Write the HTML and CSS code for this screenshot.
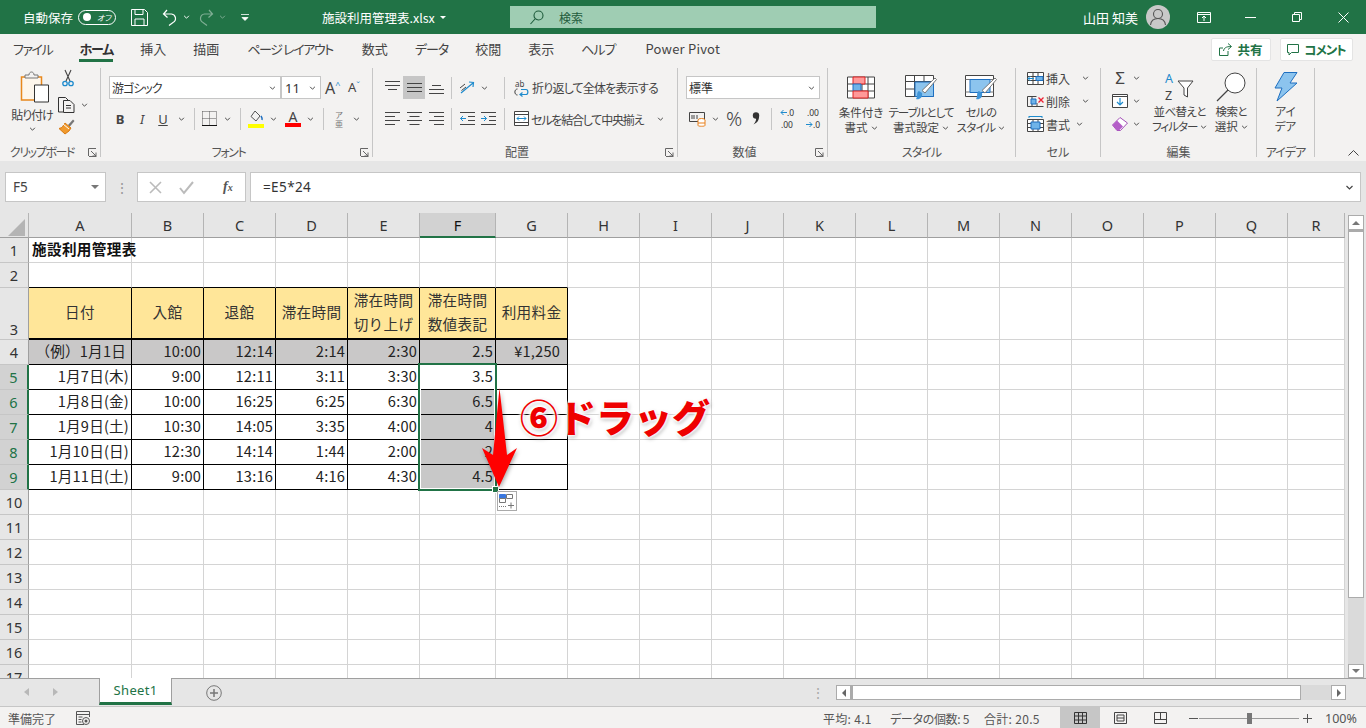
FILE: index.html
```html
<!DOCTYPE html>
<html lang="ja">
<head>
<meta charset="utf-8">
<title>施設利用管理表.xlsx - Excel</title>
<link rel="stylesheet" href="styles.css">
</head>
<body>
<svg class="defs" width="0" height="0" aria-hidden="true"><defs>
<symbol id="chev" viewBox="0 0 8 5"><path d="M1 1l3 3 3-3" fill="none" stroke="#444" stroke-width="1.2"/></symbol>
<symbol id="launch" viewBox="0 0 9 9"><path d="M.5 8V.5H8M3 3l5 5M8 4.500V8H4.500M1 8.500h7.500" fill="none" stroke="#666" stroke-width="1"/></symbol>
</defs></svg>

<header class="titlebar">
  <span class="qa-label">自動保存</span>
  <span class="toggle"><i class="toggle-dot"></i><em>オフ</em></span>
  <svg class="qa-save" width="17" height="17" viewBox="0 0 17 17"><path d="M.5.500h13l3 3v13H.5zM4 .5v5h8v-5M4 16.500V10h9v6.500" fill="none" stroke="#fff"/></svg>
  <svg class="qa-undo" width="16" height="17" viewBox="0 0 16 17"><path d="M5 1L1.500 5 5.500 8.500M2 5h7.500a4.500 4.500 0 0 1 1.500 8.500L7 16.500" fill="none" stroke="#fff" stroke-width="1.200"/></svg>
  <svg class="qa-chev" width="7" height="4" viewBox="0 0 8 5"><path d="M1 1l3 3 3-3" fill="none" stroke="#fff" stroke-width="1.200"/></svg>
  <svg class="qa-redo" width="16" height="17" viewBox="0 0 16 17"><path d="M11 1l3.500 4-4 3.500M14 5H6.500A4.500 4.500 0 0 0 5 13.500L9 16.500" fill="none" stroke="#7fae94" stroke-width="1.200"/></svg>
  <svg class="qa-chev2" width="7" height="4" viewBox="0 0 8 5"><path d="M1 1l3 3 3-3" fill="none" stroke="#7fae94" stroke-width="1.200"/></svg>
  <svg class="qa-more" width="8" height="8" viewBox="0 0 8 8"><path d="M0 1.500h8M1 4.500l3 3 3-3z" fill="#fff" stroke="#fff" stroke-width=".8"/></svg>
  <span class="doc-title">施設利用管理表.xlsx</span>
  <i class="doc-caret"></i>
  <div class="searchbox">
    <svg width="14" height="15" viewBox="0 0 14 15"><circle cx="8.500" cy="5.500" r="4.500" fill="none" stroke="#1f5c3c" stroke-width="1.100"/><path d="M5 9l-4.500 5" stroke="#1f5c3c" stroke-width="1.100"/></svg>
    <span>検索</span>
  </div>
  <span class="user">山田 知美</span>
  <span class="avatar"><svg width="24" height="24" viewBox="0 0 24 24"><circle cx="12" cy="9" r="4.500" fill="none" stroke="#555" stroke-width="1.100"/><path d="M4.500 20c.5-5 3.500-6.500 7.500-6.500s7 1.500 7.500 6.500" fill="none" stroke="#555" stroke-width="1.100"/></svg></span>
  <svg class="win win-first" width="14" height="11" viewBox="0 0 14 11"><path d="M.5.500h13v10H.5zM.5 2.500h13M7 9V4.500M5 6l2-2 2 2" fill="none" stroke="#fff"/></svg>
  <svg class="win win-min" width="11" height="1" viewBox="0 0 11 1"><path d="M0 .5h11" stroke="#fff"/></svg>
  <svg class="win win-max" width="10" height="10" viewBox="0 0 10 10"><path d="M.5 2.500h7v7h-7zM2.500 2.500v-2h7v7h-2" fill="none" stroke="#fff"/></svg>
  <svg class="win win-close" width="11" height="11" viewBox="0 0 11 11"><path d="M.5.500l10 10M10.500.500l-10 10" stroke="#fff"/></svg>
</header>

<nav class="tabs">
  <span class="tab ls14">ファイル</span>
  <span class="tab tab-on ls11">ホーム</span>
  <span class="tab">挿入</span>
  <span class="tab">描画</span>
  <span class="tab ls14 ml1">ページ レイアウト</span>
  <span class="tab ml2">数式</span>
  <span class="tab ls10">データ</span>
  <span class="tab">校閲</span>
  <span class="tab">表示</span>
  <span class="tab ls10">ヘルプ</span>
  <span class="tab tab-en ml3">Power Pivot</span>
  <button class="pill pill-share"><svg width="13" height="13" viewBox="0 0 13 13"><path d="M9 .5l3.500 3L9 6.500M12 3.500C7 3.500 5 5 4.500 8M9 8v4.500H.5V5H4" fill="none" stroke="#217346"/></svg><b>共有</b></button>
  <button class="pill pill-comment"><svg width="12" height="12" viewBox="0 0 12 12"><path d="M.5.500h11v8H4.500L2 11V8.500H.5z" fill="none" stroke="#217346"/></svg><b class="ls10">コメント</b></button>
</nav>

<section class="ribbon">
  <div class="group g-clip">
    <div class="body row-body">
      <div class="paste">
        <svg width="30" height="32" viewBox="0 0 30 32"><path d="M1.500 7h20v23h-20z" fill="#fdf6ec" stroke="#e8881c" stroke-width="1.500"/><path d="M5 8V5h4c0-4 5-4 5 0h4v3z" fill="#f3f2f1" stroke="#777"/><path d="M14.500 15h14v17h-14z" fill="#fff" stroke="#333"/></svg>
        <span class="ls10">貼り付け</span>
        <svg class="ch" width="7" height="4"><use href="#chev"/></svg>
      </div>
      <div class="clip-col">
        <svg width="16" height="17" viewBox="0 0 16 17"><path d="M5 0l5 11M11 0L6 11" stroke="#444" stroke-width="1.100"/><circle cx="5" cy="13.500" r="2.200" fill="none" stroke="#1e8bcd" stroke-width="1.300"/><circle cx="11" cy="13.500" r="2.200" fill="none" stroke="#1e8bcd" stroke-width="1.300"/></svg>
        <div class="clip-copy">
          <svg width="17" height="16" viewBox="0 0 17 16"><path d="M5 15H.5V.5h7L10 3M5.500 3.500H12l4 4v8H5.500zM8 8.500h5M8 11h5" fill="#f3f2f1" stroke="#333"/></svg>
          <svg class="ch" width="7" height="4"><use href="#chev"/></svg>
        </div>
        <svg width="17" height="16" viewBox="0 0 17 16"><path d="M10 6l5-5.500 1.500 1.500-5 6z" fill="#777"/><path d="M7 4l6 5-2 3L7 15 1 9.500l3-1z" fill="#f09a2e" stroke="#d97a10"/><path d="M5 5l6 5" stroke="#fff"/></svg>
      </div>
    </div>
    <div class="label-row"><span class="glabel ls14">クリップボード</span><svg class="launch" width="9" height="9"><use href="#launch"/></svg></div>
  </div>

  <div class="group g-font">
    <div class="body stack">
      <div class="tool-row">
        <div class="combo c-font"><span class="ls10">游ゴシック</span><svg width="7" height="4"><use href="#chev"/></svg></div>
        <div class="combo c-size"><span>11</span><svg width="7" height="4"><use href="#chev"/></svg></div>
        <span class="growA">A<sup>^</sup></span>
        <span class="shrinkA">A<sup>ˇ</sup></span>
      </div>
      <div class="tool-row">
        <span class="slot w22 t-b">B</span>
        <span class="slot w22 t-i">I</span>
        <span class="slot w20 t-u">U</span>
        <span class="slot w16"><svg width="7" height="4"><use href="#chev"/></svg></span>
        <i class="sep ml5"></i>
        <span class="slot w22 ml3"><svg width="15" height="15" viewBox="0 0 15 15"><path d="M.5.500h14M.5.500v14M14.500.500v14M7.500.500v14M.5 7.500h14" fill="none" stroke="#555" stroke-dasharray="1 1"/><path d="M0 14.500h15" stroke="#111"/></svg></span>
        <span class="slot w14"><svg width="7" height="4"><use href="#chev"/></svg></span>
        <i class="sep ml6"></i>
        <span class="slot w20 ml5"><svg width="16" height="18" viewBox="0 0 16 18"><path d="M7 1l5 5-4 5-5-4.500z" fill="none" stroke="#555"/><path d="M13 6c1 1.500 1.500 2.500 1 4" stroke="#1e6fc0" stroke-width="1.500" fill="none"/><path d="M0 14h16v4H0z" fill="#ffff00"/></svg></span>
        <span class="slot w14"><svg width="7" height="4"><use href="#chev"/></svg></span>
        <span class="slot w20 ml3 colorA">A<i></i></span>
        <span class="slot w14"><svg width="7" height="4"><use href="#chev"/></svg></span>
        <i class="sep ml6"></i>
        <span class="slot w20 ml5 phon">ア<br>亜</span>
        <span class="slot w14"><svg width="7" height="4"><use href="#chev"/></svg></span>
      </div>
    </div>
    <div class="label-row"><span class="glabel ls14">フォント</span><svg class="launch" width="9" height="9"><use href="#launch"/></svg></div>
  </div>

  <div class="group g-align">
    <div class="body stack">
      <div class="tool-row">
        <span class="slot w22"><svg width="15" height="13" viewBox="0 0 15 13"><path d="M0 .5h15M0 4.500h15M3 8.500h9" stroke="#444" fill="none"/></svg></span>
        <span class="slot w22 slot-on"><svg width="15" height="13" viewBox="0 0 15 13"><path d="M0 2.500h15M0 6.500h15M0 10.500h15" stroke="#444" fill="none"/></svg></span>
        <span class="slot w22"><svg width="15" height="13" viewBox="0 0 15 13"><path d="M3 4.500h9M0 8.500h15M0 12.500h15" stroke="#444" fill="none"/></svg></span>
        <i class="sep ml4"></i>
        <span class="slot w20 ml5"><svg width="16" height="15" viewBox="0 0 16 15"><path d="M2 13l12-10M10 2l4.500.5L14 7" fill="none" stroke="#1e8bcd" stroke-width="1.200"/><path d="M1 8l5-4M2.500 10.500L7 7" stroke="#444"/></svg></span>
        <span class="slot w14"><svg width="7" height="4"><use href="#chev"/></svg></span>
        <i class="sep ml13"></i>
        <span class="slot w20 ml6"><svg width="15" height="17" viewBox="0 0 15 17"><text x="1" y="8" font-size="8" fill="#444" class="svgt">ab</text><path d="M3.500 16C0 16 0 10 3.500 10" fill="none" stroke="#444"/><path d="M7 10.500h5c2.500 0 2.500 5 0 5H6M8.500 13.500l-2.500 2 2.500 2" fill="none" stroke="#1e8bcd" stroke-width="1.200"/></svg></span>
        <span class="rtext ml1 ls-wrap">折り返して全体を表示する</span>
      </div>
      <div class="tool-row">
        <span class="slot w22"><svg width="15" height="13" viewBox="0 0 15 13"><path d="M0 .5h15M0 4.500h10M0 8.500h15M0 12.500h10" stroke="#444" fill="none"/></svg></span>
        <span class="slot w22"><svg width="15" height="13" viewBox="0 0 15 13"><path d="M0 .5h15M2.500 4.500h10M0 8.500h15M2.500 12.500h10" stroke="#444" fill="none"/></svg></span>
        <span class="slot w22"><svg width="15" height="13" viewBox="0 0 15 13"><path d="M0 .5h15M5 4.500h10M0 8.500h15M5 12.500h10" stroke="#444" fill="none"/></svg></span>
        <i class="sep ml4"></i>
        <span class="slot w20 ml5"><svg width="15" height="13" viewBox="0 0 15 13"><path d="M0 .5h15M8 4.500h7M8 8.500h7M0 12.500h15" stroke="#444" fill="none"/><path d="M6 6.500H.5M3 4L.5 6.500 3 9" fill="none" stroke="#1e8bcd"/></svg></span>
        <span class="slot w22"><svg width="15" height="13" viewBox="0 0 15 13"><path d="M0 .5h15M8 4.500h7M8 8.500h7M0 12.500h15" stroke="#444" fill="none"/><path d="M0 6.500h5.500M3 4l2.500 2.500L3 9" fill="none" stroke="#1e8bcd"/></svg></span>
        <i class="sep ml5"></i>
        <span class="slot w20 ml6"><svg width="15" height="15" viewBox="0 0 15 15"><path d="M.5.500h14v14H.5z" fill="#fff" stroke="#444"/><path d="M.5 3.500h14M.5 11.500h14" stroke="#444"/><path d="M3 7.500h9M5 5.500l-2 2 2 2M10 5.500l2 2-2 2" fill="none" stroke="#1e8bcd"/></svg></span>
        <span class="rtext ml0 merge-text">セルを結合して中央揃え</span>
        <span class="slot w14 ml6"><svg width="7" height="4"><use href="#chev"/></svg></span>
      </div>
    </div>
    <div class="label-row"><span class="glabel">配置</span><svg class="launch" width="9" height="9"><use href="#launch"/></svg></div>
  </div>

  <div class="group g-num">
    <div class="body stack">
      <div class="tool-row">
        <div class="combo c-num"><span>標準</span><svg width="7" height="4"><use href="#chev"/></svg></div>
      </div>
      <div class="tool-row">
        <span class="slot w22"><svg width="17" height="16" viewBox="0 0 17 16"><path d="M.5 1.500h15v9H.5z" fill="none" stroke="#444"/><path d="M3 4v4M5 4v4M8 4v4" stroke="#444"/><ellipse cx="12.500" cy="9" rx="3.500" ry="1.500" fill="#fff" stroke="#e8801c"/><path d="M9 9v5.500c0 1 7 1 7 0V9M9 12h7" fill="#fff" stroke="#e8801c"/></svg></span>
        <span class="slot w14"><svg width="7" height="4"><use href="#chev"/></svg></span>
        <span class="slot w22 ml1 t-pct">%</span>
        <span class="slot w22"><svg width="8" height="13" viewBox="0 0 8 13"><circle cx="4" cy="3.500" r="3.200" fill="#333"/><path d="M7 3.500C7.500 8 5 11 1.500 12.500 3.500 10 4.500 8 4 6z" fill="#333"/></svg></span>
        <i class="sep ml4"></i>
        <span class="slot w26 ml2 t-dec"><span><svg width="7" height="7" viewBox="0 0 7 7"><path d="M7 3.500H1M3.500 1L1 3.500 3.500 6" fill="none" stroke="#1e8bcd"/></svg>.0<br>.00</span></span>
        <span class="slot w26 t-dec"><span>.00<br><svg width="7" height="7" viewBox="0 0 7 7"><path d="M0 3.500h6M3.500 1L6 3.500 3.500 6" fill="none" stroke="#1e8bcd"/></svg>.0</span></span>
      </div>
    </div>
    <div class="label-row"><span class="glabel">数値</span><svg class="launch" width="9" height="9"><use href="#launch"/></svg></div>
  </div>

  <div class="group g-style">
    <div class="body row-body styles">
      <div class="big">
        <svg width="28" height="23" viewBox="0 0 28 23"><path d="M.5.500h27v21H.5zM.5 7.500h27M.5 14.500h27M6.500.500v21M15 .500v21M21 .500v21" fill="#fff" stroke="#444"/><path d="M6 .5h12v7H6z" fill="#f99" stroke="#d22"/><path d="M6 7.500h8v7H6z" fill="#6fb3e8" stroke="#1e6fc0"/><path d="M6 14.500h15v7H6z" fill="#f99" stroke="#d22"/></svg>
        <span>条件付き</span><span>書式<svg class="ch" width="7" height="4"><use href="#chev"/></svg></span>
      </div>
      <div class="big">
        <svg width="32" height="26" viewBox="0 0 32 26"><path d="M.5.500h28v21H.5zM.5 6.500h28M.5 14h28M9.500.500v21M19 .500v21" fill="#fff" stroke="#444"/><path d="M10 7h18.500v14.500H10z" fill="#8cc4ee" stroke="#1e6fc0"/><path d="M30 3l1.500 1.500L20 18l-3-2.500z" fill="#fff" stroke="#777"/><path d="M11 24c3 1 7-1 6-6l-3-2c-3 1-1 6-3 8z" fill="#3e94d8"/></svg>
        <span class="ls10">テーブルとして</span><span>書式設定<svg class="ch" width="7" height="4"><use href="#chev"/></svg></span>
      </div>
      <div class="big">
        <svg width="32" height="26" viewBox="0 0 32 26"><path d="M.5.500h28v21H.5z" fill="#fff" stroke="#444"/><path d="M.5 4.500h28M.5 17h28" stroke="#777"/><path d="M5 4.500h20v13H5z" fill="#8cc4ee" stroke="#1e6fc0"/><path d="M30 3l1.500 1.500L20 18l-3-2.500z" fill="#fff" stroke="#777"/><path d="M11 24c3 1 7-1 6-6l-3-2c-3 1-1 6-3 8z" fill="#3e94d8"/></svg>
        <span class="ls06">セルの</span><span class="ls06">スタイル<svg class="ch" width="7" height="4"><use href="#chev"/></svg></span>
      </div>
    </div>
    <div class="label-row center"><span class="glabel ls10">スタイル</span></div>
  </div>

  <div class="group g-cell">
    <div class="body rows3">
      <div class="cell-row"><svg width="17" height="15" viewBox="0 0 17 15"><path d="M.5 1.500h16v12H.5zM.5 5.500h16M.5 9.500h16M6 1.500v12M11 1.500v12" fill="#fff" stroke="#444"/><path d="M9 5.500h7v4H9z" fill="#6fb3e8" stroke="#1e6fc0"/><path d="M7 7.500H1M3.500 5L1 7.500 3.500 10" fill="none" stroke="#1e8bcd"/></svg><span>挿入</span><svg class="ch" width="7" height="4"><use href="#chev"/></svg></div>
      <div class="cell-row"><svg width="17" height="15" viewBox="0 0 17 15"><path d="M.5 2.500h9M.5 12.500h16M.5 2.500v10M5 2.500v10M10 12.500V9" fill="none" stroke="#444"/><path d="M4 5h5v5H4z" fill="#6fb3e8" stroke="#1e6fc0"/><path d="M11.500 3.500l5 5M16.500 3.500l-5 5" stroke="#e23" stroke-width="1.300"/></svg><span>削除</span><svg class="ch" width="7" height="4"><use href="#chev"/></svg></div>
      <div class="cell-row"><svg width="17" height="16" viewBox="0 0 17 16"><path d="M.5 3.500h16v12H.5zM6 3.500v12M11 3.500v12M.5 7.500h16M.5 11.500h16" fill="#fff" stroke="#444"/><path d="M4 6h9v7H4z" fill="#6fb3e8" stroke="#1e6fc0"/><path d="M2 .5h13M2 0v2M15 0v2" stroke="#1e8bcd"/></svg><span>書式</span><svg class="ch ch-near" width="7" height="4"><use href="#chev"/></svg></div>
    </div>
    <div class="label-row center"><span class="glabel">セル</span></div>
  </div>

  <div class="group g-edit">
    <div class="body row-body">
      <div class="rows3 edit-col">
        <div class="edit-row"><span class="sigma">Σ</span><svg class="ch" width="7" height="4"><use href="#chev"/></svg></div>
        <div class="edit-row"><svg width="16" height="14" viewBox="0 0 16 14"><path d="M.5.500h15v13H.5z" fill="#fff" stroke="#444"/><path d="M.5 2.500h15" stroke="#444"/><path d="M8 4v7M5 8l3 3 3-3" fill="none" stroke="#1e8bcd" stroke-width="1.200"/></svg><svg class="ch" width="7" height="4"><use href="#chev"/></svg></div>
        <div class="edit-row"><svg width="16" height="14" viewBox="0 0 16 14"><path d="M.5 8L8 .5 15.500 6 8.500 13.500H5z" fill="#fff" stroke="#a350b8"/><path d="M.5 8L5 3.500 11 9.500 7 13.500H5z" fill="#b45fc8"/></svg><svg class="ch" width="7" height="4"><use href="#chev"/></svg></div>
      </div>
      <div class="big b-sort">
        <svg width="30" height="30" viewBox="0 0 30 30"><text x="0" y="11" font-size="12.500" fill="#1e8bcd" class="svgt">A</text><text x="0" y="28" font-size="12.500" fill="#444" class="svgt">Z</text><path d="M13 9h15l-5.500 7v9l-3.500-2v-7z" fill="#fff" stroke="#444"/></svg>
        <span class="ls06">並べ替えと</span><span class="ls10">フィルター<svg class="ch" width="7" height="4"><use href="#chev"/></svg></span>
      </div>
      <div class="big b-find">
        <svg width="30" height="30" viewBox="0 0 30 30"><circle cx="19" cy="11" r="10" fill="#fff" stroke="#444"/><path d="M12 18L1 29" stroke="#444" stroke-width="1.200"/></svg>
        <span class="ls06">検索と</span><span>選択<svg class="ch" width="7" height="4"><use href="#chev"/></svg></span>
      </div>
    </div>
    <div class="label-row center"><span class="glabel">編集</span></div>
  </div>

  <div class="group g-idea">
    <div class="body">
      <div class="big b-idea">
        <svg width="24" height="30" viewBox="0 0 24 30"><path d="M10 .5h13L16 11h7L3 29l5-13H1z" fill="#8cc4ee" stroke="#1e6fc0"/></svg>
        <span>アイ</span><span>デア</span>
      </div>
    </div>
    <div class="label-row center"><span class="glabel ls10">アイデア</span></div>
  </div>

  <svg class="collapse" width="11" height="6" viewBox="0 0 11 6"><path d="M.5 5.500l5-5 5 5" fill="none" stroke="#444"/></svg>
</section>

<section class="formula">
  <div class="namebox"><span>F5</span><i></i></div>
  <span class="dots">⋮</span>
  <div class="fxbox">
    <svg width="13" height="13" viewBox="0 0 13 13"><path d="M1 1l11 11M12 1L1 12" stroke="#bbb" stroke-width="1.600"/></svg>
    <svg width="15" height="13" viewBox="0 0 15 13"><path d="M1 7l4 5L14 1" fill="none" stroke="#bbb" stroke-width="2"/></svg>
    <em>f<small>x</small></em>
  </div>
  <div class="fx-input"><span>=E5*24</span><svg width="9" height="5"><use href="#chev"/></svg></div>
</section>

<main class="sheet">
  <div class="grid-wrap">
    <table class="grid">
      <colgroup><col class="c0"><col class="ca"><col class="c72"><col class="c72"><col class="c72"><col class="c72"><col class="cf"><col class="c72"><col class="c72"><col class="c72"><col class="c72"><col class="c72"><col class="c72"><col class="c72"><col class="c72"><col class="c72"><col class="c72"><col class="c72"><col class="cr"></colgroup>
      <thead><tr>
        <th class="corner"><svg width="17" height="17" viewBox="0 0 17 17"><path d="M17 0v17H0z" fill="#b4b4b4"/></svg></th>
        <th>A</th><th>B</th><th>C</th><th>D</th><th>E</th><th class="col-on">F</th><th>G</th><th>H</th><th>I</th><th>J</th><th>K</th><th>L</th><th>M</th><th>N</th><th>O</th><th>P</th><th>Q</th><th>R</th>
      </tr></thead>
      <tbody>
        <tr><th>1</th><td class="title" colspan="1">施設利用管理表</td><td></td><td></td><td></td><td></td><td></td><td></td><td></td><td></td><td></td><td></td><td></td><td></td><td></td><td></td><td></td><td></td><td></td></tr>
        <tr class="pre"><th>2</th><td class="bb"></td><td class="bb"></td><td class="bb"></td><td class="bb"></td><td class="bb"></td><td class="bb"></td><td class="bb"></td><td></td><td></td><td></td><td></td><td></td><td></td><td></td><td></td><td></td><td></td><td></td></tr>
        <tr class="r3"><th class="bottom">3</th><td class="hd">日付</td><td class="hd">入館</td><td class="hd">退館</td><td class="hd">滞在時間</td><td class="hd">滞在時間<br>切り上げ</td><td class="hd">滞在時間<br>数値表記</td><td class="hd">利用料金</td><td></td><td></td><td></td><td></td><td></td><td></td><td></td><td></td><td></td><td></td><td></td></tr>
        <tr><th>4</th><td class="ex pa">（例）1月1日</td><td class="ex">10:00</td><td class="ex">12:14</td><td class="ex">2:14</td><td class="ex">2:30</td><td class="ex">2.5</td><td class="ex pg">¥1,250</td><td></td><td></td><td></td><td></td><td></td><td></td><td></td><td></td><td></td><td></td><td></td></tr>
        <tr><th class="row-on">5</th><td class="dt">1月7日(木)</td><td class="dt">9:00</td><td class="dt">12:11</td><td class="dt">3:11</td><td class="dt">3:30</td><td class="dt">3.5</td><td class="dt"></td><td></td><td></td><td></td><td></td><td></td><td></td><td></td><td></td><td></td><td></td><td></td></tr>
        <tr><th class="row-on">6</th><td class="dt">1月8日(金)</td><td class="dt">10:00</td><td class="dt">16:25</td><td class="dt">6:25</td><td class="dt">6:30</td><td class="dt sel">6.5</td><td class="dt"></td><td></td><td></td><td></td><td></td><td></td><td></td><td></td><td></td><td></td><td></td><td></td></tr>
        <tr><th class="row-on">7</th><td class="dt">1月9日(土)</td><td class="dt">10:30</td><td class="dt">14:05</td><td class="dt">3:35</td><td class="dt">4:00</td><td class="dt sel">4</td><td class="dt"></td><td></td><td></td><td></td><td></td><td></td><td></td><td></td><td></td><td></td><td></td><td></td></tr>
        <tr><th class="row-on">8</th><td class="dt">1月10日(日)</td><td class="dt">12:30</td><td class="dt">14:14</td><td class="dt">1:44</td><td class="dt">2:00</td><td class="dt sel">2</td><td class="dt"></td><td></td><td></td><td></td><td></td><td></td><td></td><td></td><td></td><td></td><td></td><td></td></tr>
        <tr><th class="row-on">9</th><td class="dt">1月11日(土)</td><td class="dt">9:00</td><td class="dt">13:16</td><td class="dt">4:16</td><td class="dt">4:30</td><td class="dt sel">4.5</td><td class="dt"></td><td></td><td></td><td></td><td></td><td></td><td></td><td></td><td></td><td></td><td></td><td></td></tr>
        <tr><th>10</th><td></td><td></td><td></td><td></td><td></td><td></td><td></td><td></td><td></td><td></td><td></td><td></td><td></td><td></td><td></td><td></td><td></td><td></td></tr>
        <tr><th>11</th><td></td><td></td><td></td><td></td><td></td><td></td><td></td><td></td><td></td><td></td><td></td><td></td><td></td><td></td><td></td><td></td><td></td><td></td></tr>
        <tr><th>12</th><td></td><td></td><td></td><td></td><td></td><td></td><td></td><td></td><td></td><td></td><td></td><td></td><td></td><td></td><td></td><td></td><td></td><td></td></tr>
        <tr><th>13</th><td></td><td></td><td></td><td></td><td></td><td></td><td></td><td></td><td></td><td></td><td></td><td></td><td></td><td></td><td></td><td></td><td></td><td></td></tr>
        <tr><th>14</th><td></td><td></td><td></td><td></td><td></td><td></td><td></td><td></td><td></td><td></td><td></td><td></td><td></td><td></td><td></td><td></td><td></td><td></td></tr>
        <tr><th>15</th><td></td><td></td><td></td><td></td><td></td><td></td><td></td><td></td><td></td><td></td><td></td><td></td><td></td><td></td><td></td><td></td><td></td><td></td></tr>
        <tr><th>16</th><td></td><td></td><td></td><td></td><td></td><td></td><td></td><td></td><td></td><td></td><td></td><td></td><td></td><td></td><td></td><td></td><td></td><td></td></tr>
        <tr><th>17</th><td></td><td></td><td></td><td></td><td></td><td></td><td></td><td></td><td></td><td></td><td></td><td></td><td></td><td></td><td></td><td></td><td></td><td></td></tr>
      </tbody>
    </table>
    <div class="selection"></div>
    <div class="handle"></div>
    <div class="autofill"><svg width="16" height="15" viewBox="0 0 16 15"><path d="M.5.500h6v4h-6z" fill="#3a78e0" stroke="#3a78e0"/><path d="M7.500.500h6v4h-6zM.5 4.500h6v4h-6z" fill="#fff" stroke="#777"/><path d="M0 12.500h7" stroke="#777" stroke-dasharray="1 1"/><path d="M9 11.500h6M12 8.500v6" stroke="#777"/></svg></div>
    <svg class="arrow" width="50" height="115" viewBox="0 0 50 115"><path d="M21.500 7L29 74l10-7-18 39L4 67l11 7z" fill="#ff0000"/></svg>
    <div class="callout">⑥ドラッグ</div>
  </div>
  <aside class="vscroll">
    <span class="vbtn"><i class="up"></i></span>
    <span class="vthumb"></span>
    <span class="vtrack"></span>
    <span class="vbtn vbtn-end"><i class="down"></i></span>
  </aside>
</main>

<section class="sheetbar">
  <i class="nav nav-l"></i>
  <i class="nav nav-r"></i>
  <div class="sheettab">Sheet1</div>
  <svg class="addsheet" width="16" height="16" viewBox="0 0 16 16"><circle cx="8" cy="8" r="7.300" fill="none" stroke="#777"/><path d="M8 4v8M4 8h8" stroke="#777" stroke-width="1.500"/></svg>
  <span class="hdots">⋮</span>
  <div class="hscroll">
    <span class="hbtn"><i class="left"></i></span>
    <span class="hthumb"></span>
    <span class="htrack"></span>
    <span class="hbtn"><i class="right"></i></span>
  </div>
</section>

<footer class="status">
  <span class="ready">準備完了</span>
  <svg class="macro" width="14" height="14" viewBox="0 0 14 14"><path d="M8 13.500H.5V.5h13V6M.5 3.500h13M2.500 6h4M2.500 8.500h3M2.500 11h3" fill="none" stroke="#555"/><circle cx="10" cy="10" r="3.500" fill="none" stroke="#555"/><circle cx="10" cy="10" r="1.500" fill="#555"/></svg>
  <span class="stat s1">平均: 4.1</span>
  <span class="stat s2">データの個数: 5</span>
  <span class="stat s3">合計: 20.5</span>
  <span class="view view-on"><svg width="13" height="12" viewBox="0 0 13 12"><path d="M.5.500h12v11H.5zM.5 4h12M.5 8h12M4.500.500v11M8.500.500v11" fill="none" stroke="#333"/></svg></span>
  <span class="view"><svg width="13" height="12" viewBox="0 0 13 12"><path d="M.5.500h12v11H.5zM3 3h7v6H3zM3 6h7" fill="none" stroke="#444"/></svg></span>
  <span class="view"><svg width="13" height="12" viewBox="0 0 13 12"><path d="M.5.500h12v11H.5zM.5 7.500h12M6.500.500v7" fill="none" stroke="#444"/></svg></span>
  <span class="zoom-minus"></span>
  <span class="slider"><i></i></span>
  <span class="zoom-plus"></span>
  <span class="pct">100%</span>
</footer>
</body>
</html>
```
FILE: styles.css
```css
*{box-sizing:border-box}
html,body{margin:0;padding:0;height:100%}
body{width:1366px;height:728px;overflow:hidden;display:flex;flex-direction:column;background:#e6e6e6;font-family:"Noto Sans CJK JP","Noto Sans",sans-serif;font-feature-settings:"palt";color:#444}
.defs{position:absolute}
svg{display:block;flex:none;overflow:visible}
.svgt{font-family:"Noto Sans","Noto Sans CJK JP",sans-serif}
.ls06{letter-spacing:-.6px}
.ls10{letter-spacing:-1px}
.ls11{letter-spacing:-1.1px}
.ls12{letter-spacing:-1.2px}
.ls14{letter-spacing:-1.4px}

/* title bar */
.titlebar{height:34px;background:#217346;color:#fff;display:flex;align-items:center;font-size:12px;flex:none}
.qa-label{margin-left:23px;width:49px;white-space:nowrap;font-size:12.500px}
.toggle{margin-left:6px;width:38px;height:15px;border:1px solid #fff;border-radius:8px;display:flex;align-items:center;padding-left:4px}
.toggle-dot{width:8px;height:8px;border-radius:50%;background:#fff}
.toggle em{font-size:8px;margin-left:6px;font-style:italic;white-space:nowrap}
.qa-save{margin-left:15px}
.qa-undo{margin-left:14px}
.qa-chev{margin-left:5px}
.qa-redo{margin-left:8px}
.qa-chev2{margin-left:5px}
.qa-more{margin-left:15px}
.doc-title{margin-left:73px;width:112px;white-space:nowrap;font-size:12.500px}
.doc-caret{margin-left:6px;border:3px solid transparent;border-top:3px solid #fff;margin-top:3px}
.searchbox{margin-left:64px;width:366px;height:22px;background:#9fcdb3;display:flex;align-items:center;padding-left:20px;color:#1f5c3c}
.searchbox span{margin-left:15px}
.user{margin-left:207px;width:53px;white-space:nowrap;font-size:13px}
.avatar{margin-left:10px;width:24px;height:24px;border-radius:50%;background:#c8c8c8}
.win-first{margin-left:27px}
.win-min{margin-left:34px}
.win-max{margin-left:36px}
.win-close{margin-left:36px}

/* tabs */
.tabs{height:28px;background:#f3f2f1;display:flex;align-items:center;padding-left:13px;font-size:13px;flex:none}
.tab{margin-right:27px;white-space:nowrap;color:#444;height:28px;line-height:30px}
.tab-on{font-weight:700;color:#333;border-bottom:3px solid #217346;height:28px}
.tab-en{letter-spacing:.2px}
.pill{height:23px;background:#fff;border:1px solid #e4e4e4;border-radius:2px;display:flex;align-items:center;justify-content:center;gap:5px;font:inherit;font-size:12.500px;color:#217346;padding:0;margin-top:3px}
.pill b{font-weight:700}
.pill-share{margin-left:auto;width:60px}
.pill-comment{margin-left:9px;width:73px;margin-right:13px}

/* ribbon */
.ribbon{height:99px;background:#f3f2f1;display:flex;font-size:11.500px;flex:none;align-items:flex-start;color:#444}
.group{height:89px;margin-top:6px;border-right:1px solid #c6c6c6;display:flex;flex-direction:column;flex:none}
.body{height:76px;flex:none}
.row-body{display:flex}
.stack{padding:8px 0 0 8px;display:flex;flex-direction:column;gap:8px}
.label-row{height:13px;display:flex;align-items:center;padding-top:2px}
.glabel{flex:1;text-align:center;font-size:12px;color:#555;white-space:nowrap}
.launch{margin:1px 3px 0 4px}
.g-clip{width:101px}
.g-font{width:272px}
.g-align{width:305px}
.g-num{width:150px}
.g-style{width:188px}
.g-cell{width:85px}
.g-edit{width:156px}
.g-idea{width:58px}
.collapse{margin:88px 0 0 33px}

.paste{margin-left:10px;width:44px;display:flex;flex-direction:column;align-items:center;padding-top:2px;white-space:nowrap;font-size:12px}
.paste svg:first-child{margin-left:6px}
.paste span{margin-top:5px;line-height:16px}
.paste .ch{margin-top:4px}
.clip-col{margin-left:4px;display:flex;flex-direction:column;gap:6px;padding-top:2px}
.clip-col>svg:first-child{margin-left:2px}
.clip-copy{display:flex;align-items:center;gap:6px;margin-top:4px}

.tool-row{height:23px;display:flex;align-items:center;flex:none}
.combo{height:23px;background:#fff;border:1px solid #c6c6c6;display:flex;align-items:center;justify-content:space-between;padding:0 4px 0 2px;font-size:12px;color:#333;flex:none}
.c-font{width:172px}
.c-size{width:40px;font-family:"Noto Sans",sans-serif;font-size:13px;padding-left:3px}
.c-num{width:134px}
.growA,.shrinkA{font-family:"Noto Sans",sans-serif;line-height:1;display:flex;color:#444;white-space:nowrap}
.growA{font-size:16px;margin-left:4px;width:22px}
.shrinkA{font-size:13px;margin-left:1px}
.growA sup,.shrinkA sup{font-size:9px;color:#1e8bcd;line-height:1}
.slot{display:flex;align-items:center;justify-content:center;height:23px;flex:none;font-family:"Noto Sans",sans-serif}
.slot-on{background:#c6c6c6}
.w14{width:14px}.w16{width:16px}.w20{width:20px}.w22{width:22px}.w26{width:26px}
.ml0{margin-left:0}.ml1{margin-left:1px}.ml2{margin-left:2px}.ml3{margin-left:3px}.ml4{margin-left:4px}.ml5{margin-left:5px}.ml6{margin-left:6px}.ml13{margin-left:13px}
.sep{width:1px;height:22px;background:#c6c6c6;flex:none}
.t-b{font-weight:700;font-size:13px}
.t-i{font-style:italic;font-size:13px}
.t-u{font-size:13px;text-decoration:underline}
.colorA{flex-direction:column;font-size:14px;line-height:13px;color:#444}
.colorA i{width:16px;height:4px;background:#f00}
.phon{font-family:"Noto Sans CJK JP",sans-serif;font-size:8px;line-height:9px;color:#777;display:block;text-align:center;padding-top:3px}
.t-pct{font-size:20px;font-weight:300}
.t-dec{font-size:8.500px;line-height:11.500px;color:#333;text-align:center}
.t-dec svg{display:inline-block}
.rtext{white-space:nowrap;font-size:12px;color:#444}
.ls-wrap{letter-spacing:-.8px}
.merge-text{width:116px;letter-spacing:-1.2px;margin-top:2px}

.styles{padding:0 0 0 3px}
.big{width:60px;display:flex;flex-direction:column;align-items:center;font-size:11.500px;line-height:15px;white-space:nowrap;padding-top:7px}
.big>svg:first-child{margin-bottom:4px;height:26px}
.big span{display:flex;align-items:center;gap:3px}
.rows3{display:flex;flex-direction:column;gap:3px}
.cell-row{height:20px;display:flex;align-items:center;margin-left:11px;font-size:12px;white-space:nowrap}
.cell-row span{margin-left:2px;width:30px}
.cell-row .ch{margin-left:6px}
.cell-row .ch-near{margin-left:0}
.edit-col{margin-left:11px;width:46px;flex:none}
.edit-row{height:20px;display:flex;align-items:center;gap:5px}
.sigma{width:16px;font-size:17px;line-height:18px;font-family:"Noto Sans",sans-serif;text-align:center;color:#444}
.b-sort{width:60px;margin-left:-8px;padding-top:4px}
.b-sort>svg:first-child,.b-find>svg:first-child,.b-idea>svg:first-child{height:30px;margin-bottom:2px}
.b-find{width:50px;padding-top:4px;margin-left:-3px}
.b-idea{width:57px;padding-top:4px}

/* formula bar */
.formula{height:52px;flex:none;display:flex;align-items:flex-start;padding:11px 5px 0;background:#e6e6e6}
.namebox,.fxbox,.fx-input{height:30px;background:#fff;border:1px solid #c6c6c6;display:flex;align-items:center;flex:none}
.namebox{width:101px;padding:0 6px 0 7px;justify-content:space-between;font-family:"Noto Sans",sans-serif;font-size:13.500px;color:#444}
.namebox i{border:4px solid transparent;border-top:4px solid #777;margin-top:4px}
.dots{width:32px;text-align:center;color:#999;line-height:30px;font-size:14px}
.fxbox{width:109px;padding-left:11px;gap:17px}
.fxbox em{font:italic 700 14px "Liberation Serif",serif;color:#555;margin-left:12px}
.fxbox small{font-size:10px}
.fx-input{width:1111px;margin-left:4px;padding:0 6px 0 12px;justify-content:space-between;font-family:"Noto Sans",sans-serif;font-size:13.500px;color:#333;letter-spacing:.4px}

/* sheet */
.sheet{height:465px;flex:none;display:flex;background:#e6e6e6}
.grid-wrap{width:1345px;height:465px;position:relative;overflow:hidden;background:#fff;flex:none}
.grid{border-collapse:separate;border-spacing:0;table-layout:fixed;width:1345px;font-size:14.600px;color:#222;font-feature-settings:normal}
.c0{width:29px}.ca{width:103px}.c72{width:72px}.cf{width:76px}.cr{width:57px}
.grid th{font-weight:400;background:#e6e6e6;color:#333;text-align:center;padding:0;border-right:1px solid #b4b4b4;border-bottom:1px solid #c6c6c6;height:25px;font-family:"Noto Sans","Noto Sans CJK JP",sans-serif;font-size:14.500px;line-height:20px;overflow:hidden}
.grid thead th{border-bottom:1px solid #9f9f9f;height:25px}
.grid tbody th{border-right:1px solid #9f9f9f}
.corner svg{margin:5px 0 0 8px}
.col-on{background:#d2d2d2 !important;color:#111 !important;border-bottom:2px solid #217346 !important}
.row-on{background:#d2d2d2 !important;color:#217346 !important;border-right:2px solid #217346 !important}
.bottom{vertical-align:bottom}
.grid td{height:25px;padding:0 2px 2px 2px;border-right:1px solid #d4d4d4;border-bottom:1px solid #d4d4d4;line-height:20px;overflow:hidden;white-space:nowrap;text-align:right;letter-spacing:.2px}
.grid tr.r3 td,.grid tr.r3 th{height:52px}
.grid td.title{overflow:visible;text-align:left;font-weight:700;padding-left:3px;position:relative;color:#111;letter-spacing:.35px}
.grid td.bb{border-bottom-color:#000}
.grid td.hd{background:#ffe699;border-right-color:#000;border-bottom:2px solid #000;text-align:center;line-height:24px;letter-spacing:.3px;color:#333;padding-bottom:2px}
.grid td.ex{background:#c9c8c8;border-right-color:#000;border-bottom-color:#000}
.grid td.pa{padding-right:5px}
.grid td.pg{padding-right:7px}
.grid td.dt{border-right-color:#000;border-bottom-color:#000}
.grid td.sel{background:#c8c8c8}
.selection{position:absolute;left:418px;top:150px;width:79px;height:128px;border:2px solid #217346;box-shadow:inset 0 0 0 1px #fff;pointer-events:none}
.handle{position:absolute;left:492px;top:273px;width:7px;height:7px;background:#217346;border:1px solid #fff}
.autofill{position:absolute;left:497px;top:278px;width:20px;height:20px;background:#fff;border:1px solid #aaa;display:flex;align-items:center;justify-content:center}
.arrow{position:absolute;left:478px;top:168px;filter:drop-shadow(1px 2px 2px rgba(0,0,0,.35))}
.callout{position:absolute;left:520px;top:178px;font-size:38px;font-weight:900;line-height:50px;color:#ee0000;white-space:nowrap;font-feature-settings:normal;text-shadow:0 0 3px #fff,0 0 3px #fff,0 0 3px #fff,0 0 4px #fff,1px 2px 4px rgba(0,0,0,.35)}
.vscroll{width:16px;margin-left:3px;padding-top:2px;display:flex;flex-direction:column;flex:none;height:465px}
.vbtn{height:15px;background:#fff;border:1px solid #ababab;display:flex;align-items:center;justify-content:center;flex:none}
.vbtn-end{height:14px}
.vthumb{height:368px;background:#fff;border:1px solid #ababab;border-top-width:2px;flex:none}
.vtrack{flex:1;background:#dadada}
.up{border:4px solid transparent;border-bottom:4px solid #777;margin-top:-4px}
.down{border:4px solid transparent;border-top:4px solid #777;margin-top:4px}

/* sheet bar */
.sheetbar{height:29px;flex:none;background:#e6e6e6;border-top:1px solid #9f9f9f;border-bottom:1px solid #c6c6c6;display:flex;align-items:flex-start}
.nav{border:4px solid transparent;margin-top:9px;flex:none}
.nav-l{border-right:5px solid #b8b8b8;margin-left:24px;border-left:0}
.nav-r{border-left:5px solid #b8b8b8;margin-left:24px;border-right:0}
.sheettab{margin-left:41px;margin-top:-1px;width:73px;height:27px;background:#fff;border-left:1px solid #9f9f9f;border-right:1px solid #9f9f9f;border-bottom:3px solid #217346;font-family:"Noto Sans",sans-serif;font-size:13px;color:#217346;text-align:center;line-height:25px;letter-spacing:.3px}
.addsheet{margin:6px 0 0 34px}
.hdots{margin:5px 0 0 589px;color:#aaa;line-height:16px;font-size:14px;width:10px;text-align:center}
.hscroll{margin:6px 0 0 15px;width:510px;height:15px;display:flex;flex:none}
.hbtn{width:15px;height:15px;background:#fff;border:1px solid #ababab;display:flex;align-items:center;justify-content:center;flex:none}
.hthumb{width:450px;background:#fff;border:1px solid #ababab;border-left-width:2px;flex:none}
.htrack{flex:1;background:#dadada}
.left{border:4px solid transparent;border-right:4px solid #666;border-left:0}
.right{border:4px solid transparent;border-left:4px solid #666;border-right:0}

/* status */
.status{height:22px;flex:none;background:#f3f2f1;display:flex;align-items:center;font-size:12px;color:#555}
.ready{margin-left:8px;width:49px;white-space:nowrap}
.macro{margin-left:19px}
.stat{white-space:nowrap}
.s1{margin-left:733px;width:67px;letter-spacing:.3px}
.s2{width:94px;letter-spacing:-.3px}
.s3{width:76px;letter-spacing:.3px}
.view{width:40px;height:22px;display:flex;align-items:center;justify-content:center;flex:none}
.view-on{background:#c6c6c6}
.zoom-minus{margin-left:9px;width:9px;height:1px;background:#555}
.slider{margin-left:1px;width:100px;height:1px;background:#999;display:flex;justify-content:center;align-items:center}
.slider i{width:5px;height:11px;background:#777}
.zoom-plus{margin-left:4px;width:9px;height:9px;background:linear-gradient(#555,#555) center/9px 1px no-repeat,linear-gradient(#555,#555) center/1px 9px no-repeat}
.pct{margin-left:13px;white-space:nowrap;font-family:"Noto Sans",sans-serif;font-size:12.500px}
```
